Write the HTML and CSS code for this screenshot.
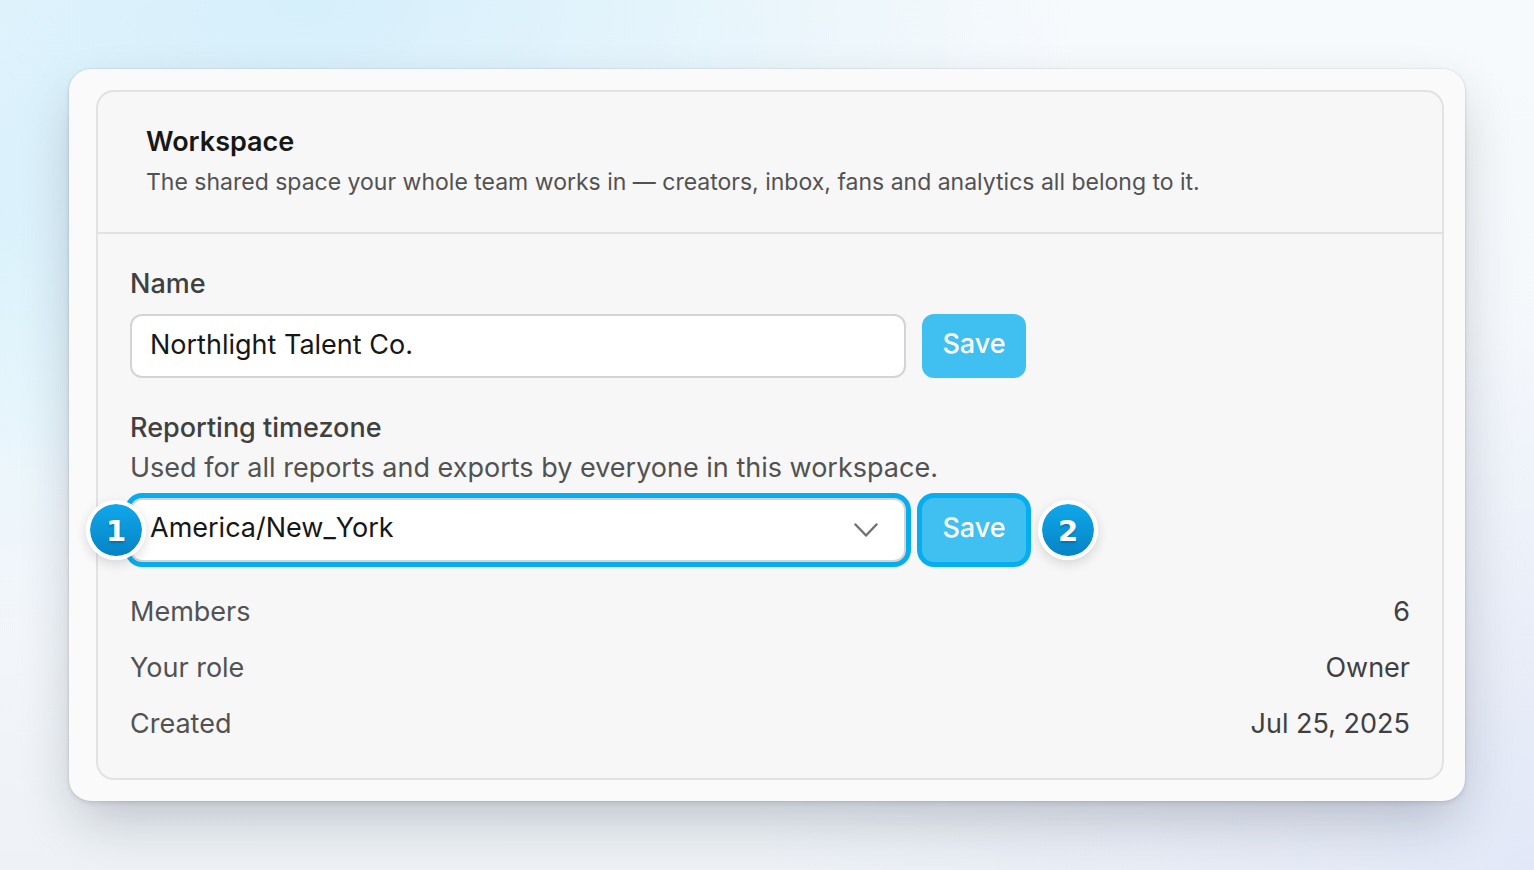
FILE: index.html
```html
<!DOCTYPE html>
<html lang="en">
<head>
<meta charset="utf-8">
<meta name="viewport" content="width=device-width, initial-scale=1">
<title>Workspace</title>
<link rel="stylesheet" href="styles.css">
</head>
<body>
<main class="frame">
  <section class="panel">
    <header class="panel-header">
      <h1 class="title">Workspace</h1>
      <p class="subtitle">The shared space your whole team works in — creators, inbox, fans and analytics all belong to it.</p>
    </header>
    <div class="panel-body">
      <form class="field">
        <label class="label" for="name">Name</label>
        <div class="controls">
          <input class="control" id="name" type="text" value="Northlight Talent Co.">
          <button class="save" type="button">Save</button>
        </div>
      </form>
      <form class="field">
        <div>
          <label class="label" for="timezone">Reporting timezone</label>
          <p class="hint">Used for all reports and exports by everyone in this workspace.</p>
        </div>
        <div class="controls">
          <div class="select-wrap">
            <select class="control highlight" id="timezone"><option>America/New_York</option></select>
            <svg class="chevron" viewBox="0 0 24 14" aria-hidden="true"><path d="M1.5 1.5 12 12.500 22.500 1.500"/></svg>
            <span class="badge badge-start">1</span>
          </div>
          <div class="save-wrap">
            <button class="save highlight" type="button">Save</button>
            <span class="badge badge-end">2</span>
          </div>
        </div>
      </form>
      <dl class="facts">
        <div class="fact"><dt>Members</dt><dd>6</dd></div>
        <div class="fact"><dt>Your role</dt><dd>Owner</dd></div>
        <div class="fact"><dt>Created</dt><dd>Jul 25, 2025</dd></div>
      </dl>
    </div>
  </section>
</main>
</body>
</html>
```
FILE: styles.css
```css
* { box-sizing: border-box; }

body {
  margin: 0;
  min-height: 100vh;
  padding: 69px;
  font-family: Inter, "Liberation Sans", sans-serif;
  font-size: 27px;
  line-height: 40px;
  color: #525252;
  background:
    radial-gradient(ellipse 50% 60% at 20% 0%, #d5effb 0%, transparent 100%),
    radial-gradient(ellipse 26% 48% at 0% 25%, #dff4fb 0%, transparent 100%),
    radial-gradient(ellipse 50% 65% at 100% 100%, #e2e8f7 0%, transparent 100%),
    linear-gradient(180deg, #f7fafc 0%, #f4f7fb 60%, #eef2f6 100%);
}

h1, p, dl, dd { margin: 0; }

.frame {
  padding: 21px 21px 21px 27px;
  border-radius: 22px;
  background: #fafafa;
  box-shadow:
    0 0 0 1px rgba(15, 23, 42, 0.04),
    0 2px 5px rgba(15, 23, 42, 0.10),
    0 24px 56px -8px rgba(15, 23, 42, 0.24);
}

.panel {
  border: 2px solid #e2e2e2;
  border-radius: 18px;
  background: #f7f7f7;
}

.panel-header {
  padding: 30px 48px;
  border-bottom: 2px solid #e2e2e2;
}

.title {
  font-size: 27px;
  font-weight: 600;
  color: #171717;
}

.subtitle {
  font-size: 23px;
}

.panel-body {
  display: flex;
  flex-direction: column;
  gap: 30px;
  padding: 30px 32px 34px;
}

.field {
  display: flex;
  flex-direction: column;
  gap: 10px;
}

.label {
  display: block;
  font-weight: 500;
  color: #404040;
}

.controls {
  display: grid;
  grid-template-columns: minmax(0, 776px) 104px;
  gap: 16px;
}

.control {
  display: block;
  width: 100%;
  height: 64px;
  padding: 0 18px 4px;
  border: 2px solid #d4d4d4;
  border-radius: 12px;
  background: #fff;
  font: inherit;
  color: #171717;
  appearance: none;
}

.save {
  display: block;
  width: 100%;
  height: 64px;
  padding: 0 0 4px;
  border: 0;
  border-radius: 12px;
  background: #3fc0f1;
  font: inherit;
  font-weight: 500;
  color: #fff;
}

.highlight { box-shadow: 0 0 0 5px #06aeef; }

.select-wrap, .save-wrap { position: relative; }

.chevron {
  position: absolute;
  top: 25px;
  right: 28px;
  width: 24px;
  height: 14px;
  fill: none;
  stroke: #737373;
  stroke-width: 2.5;
  stroke-linecap: round;
  stroke-linejoin: round;
  pointer-events: none;
}

.badge {
  position: absolute;
  top: 2px;
  width: 60px;
  height: 60px;
  border: 4px solid #fff;
  border-radius: 50%;
  background: linear-gradient(180deg, #10a8ea, #0583c5) padding-box;
  box-shadow: 0 4px 12px rgba(15, 23, 42, 0.14);
  color: #fff;
  font: bold 29px/54px "DejaVu Sans", sans-serif;
  text-align: center;
  text-shadow: 0 2px 2px rgba(0, 50, 90, 0.3);
}

.badge-start { left: -44px; }
.badge-end { left: calc(100% + 12px); }

.facts {
  display: grid;
  gap: 16px;
}

.fact {
  display: flex;
  justify-content: space-between;
}

.fact dd { color: #404040; }
```
